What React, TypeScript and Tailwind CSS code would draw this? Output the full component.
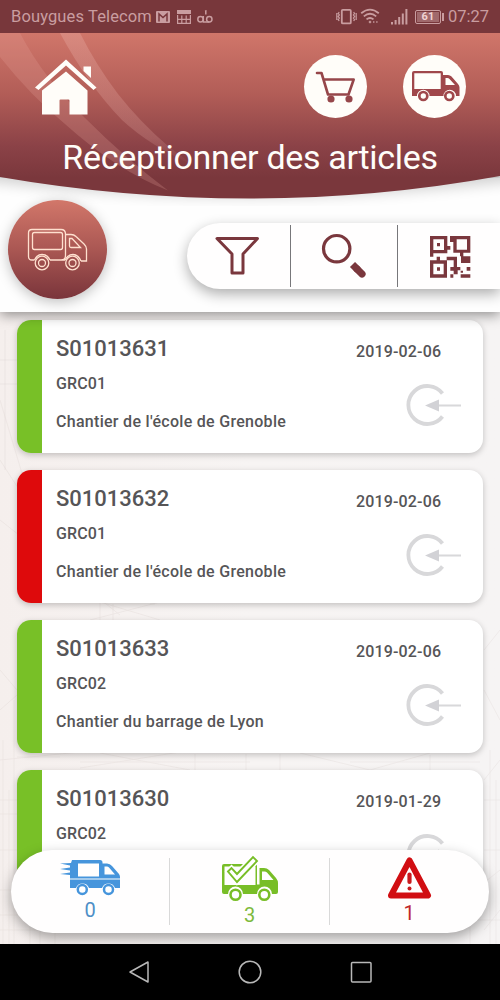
import React from "react";

type Status = "received" | "late";

interface Order {
  id: string;
  code: string;
  site: string;
  date: string;
  status: Status;
}

const orders: Order[] = [
  { id: "S01013631", code: "GRC01", site: "Chantier de l'école de Grenoble", date: "2019-02-06", status: "received" },
  { id: "S01013632", code: "GRC01", site: "Chantier de l'école de Grenoble", date: "2019-02-06", status: "late" },
  { id: "S01013633", code: "GRC02", site: "Chantier du barrage de Lyon", date: "2019-02-06", status: "received" },
  { id: "S01013630", code: "GRC02", site: "Chantier du barrage de Lyon", date: "2019-01-29", status: "received" },
];

function StatusBar() {
  return (
    <div className="relative z-20 flex h-[33px] shrink-0 items-center bg-[#78373b] pr-[11px] pl-[11px] text-[16.5px] text-[#c99da0]">
      <span className="w-[142px] whitespace-nowrap pt-[2px] tracking-[0.12px]">Bouygues Telecom</span>
      <svg className="ml-[3px] h-[12px] w-[14px]" viewBox="0 0 14 12">
        <rect width="14" height="12" rx="1" fill="#c99da0" />
        <path d="M3 10.5V3l4 3.6L11 3v7.5" fill="none" stroke="#78373b" strokeWidth="1.5" />
      </svg>
      <svg className="ml-[7px] h-[14px] w-[14px]" viewBox="0 0 14 14">
        <path d="M0 0h14v4H0z" fill="#c99da0" />
        <path d="M.6 5v8.400h12.800V5M.6 9.300h12.800M4.800 5.500v8M9.200 5.500v8" fill="none" stroke="#c99da0" strokeWidth="1.200" />
      </svg>
      <svg className="ml-[6px] h-[14px] w-[16px]" viewBox="0 0 16 14" fill="none" stroke="#c99da0" strokeWidth="1.5">
        <circle cx="3.5" cy="9.2" r="2.7" />
        <circle cx="12.3" cy="9.2" r="2.7" />
        <path d="M6.3 6v6.1h6M8 1.2l.8-.2v3.5" />
      </svg>
      <svg className="ml-auto h-[17px] w-[21px]" viewBox="0 0 21 17" fill="none" stroke="#c99da0">
        <rect x="5.8" y="1.8" width="9" height="13.6" rx="1" strokeWidth="1.8" />
        <path d="M3.2 4l-1 1.4 1.2 1.5-1.2 1.6 1.2 1.6-1.2 1.6 1 1.3M17.6 4l1 1.4-1.2 1.5 1.2 1.6-1.2 1.6 1.2 1.6-1 1.3M.8 5v7M20.2 5v7" strokeWidth="1.2" />
      </svg>
      <svg className="ml-[3px] h-[17px] w-[20px]" viewBox="0 0 20 17" fill="none" stroke="#c99da0" strokeWidth="1.8">
        <path d="M1.2 5.2Q10 -2 18.8 5.2M3.8 8.4Q10 3.2 16.2 8.4M6.5 11.4Q10 8.5 13.5 11.4" />
        <circle cx="10" cy="14" r="1" fill="#c99da0" strokeWidth=".6" />
        <path d="M13.3 14h1M16.4 14h1" strokeWidth="2" />
      </svg>
      <svg className="ml-[11px] h-[16px] w-[17px]" viewBox="0 0 17 16" fill="#c99da0">
        <path d="M0 13h2v2.5H0zM3.6 11h2v4.5h-2zM7.2 8h2v7.5h-2zM10.8 4.5h2v11h-2zM14.4 0h2v15.5h-2z" />
      </svg>
      <div className="ml-[7px] flex items-center">
        <div className="flex h-[14px] w-[26px] items-center justify-center rounded-[2px] border border-[#c99da0] bg-[#a0696c] bg-clip-content p-[1px] text-[11px] leading-none font-bold text-[#f0d3d3]">
          61
        </div>
        <div className="ml-[1px] h-[8px] w-[2px] bg-[#c99da0]" />
      </div>
      <span className="ml-[4px] pt-[2px] whitespace-nowrap">07:27</span>
    </div>
  );
}

function SolidTruck() {
  return (
    <svg className="h-[31px] w-[48px]" viewBox="0 0 48 31">
      <path
        fill="#a0474b"
        fillRule="evenodd"
        d="M2 0H29Q31 0 31 2V4H36Q38 4 39.5 5.5L46 13Q47.5 14.5 47.5 16.5V25H44A6 6 0 0 0 31.5 25H17.500A6 6 0 0 0 5 25H0V2Q0 0 2 0ZM2.300 2.300V18H28.700V2.300ZM33.500 7V14H43L37.500 8Q36.500 7 35.500 7Z"
      />
      <g fill="#fffdf9" stroke="#a0474b" strokeWidth="2.700">
        <circle cx="11.300" cy="25" r="4" />
        <circle cx="37.300" cy="25" r="4" />
      </g>
    </svg>
  );
}

function Header() {
  return (
    <header className="relative z-10 h-[145px] shrink-0">
      <svg className="pointer-events-none absolute top-0 left-0 h-[190px] w-[500px]" viewBox="0 33 500 190">
        <defs>
          <linearGradient id="brand" x1="0" y1="33" x2="0" y2="178" gradientUnits="userSpaceOnUse">
            <stop offset="0" stopColor="#d0766a" />
            <stop offset=".42" stopColor="#b25d57" />
            <stop offset=".78" stopColor="#8b4247" />
            <stop offset="1" stopColor="#7a373c" />
          </linearGradient>
          <linearGradient id="streak" x1="0" y1="33" x2="0" y2="165" gradientUnits="userSpaceOnUse">
            <stop offset="0" stopColor="#e8aca4" stopOpacity=".36" />
            <stop offset=".8" stopColor="#dc9f9b" stopOpacity=".26" />
            <stop offset="1" stopColor="#dc9f9b" stopOpacity="0" />
          </linearGradient>
          <filter id="edge" x="-10%" y="-10%" width="120%" height="130%">
            <feGaussianBlur stdDeviation="7" />
          </filter>
        </defs>
        <path d="M-20 150V180Q250 213 520 180V150Z" fill="#000" opacity=".18" filter="url(#edge)" />
        <path d="M0 33H500V176Q376 198.500 250 198.500Q124 198.500 0 177Z" fill="url(#brand)" />
        <path d="M0 33H20Q44 79 85 118Q125 158 168 190.500Q116 170 65 124Q30 95 0 57Z" fill="#e5a39c" opacity=".24" />
        <path d="M60 33H80Q96 65 118 94Q140 122 169 147L195 166Q150 146 122 120Q88 85 60 33Z" fill="url(#streak)" />
      </svg>
      <div className="relative flex items-center pt-[22px] pl-[35px]">
        <svg className="h-[57px] w-[62px]" viewBox="35.500 54.500 62 57" fill="#fffdf9">
          <path d="M66.500 56L97 84L94 86.500L66.500 62L39 86.500L35.500 84Z" />
          <path d="M84 63H91.500V74.500L84 67.500Z" />
          <path d="M66.500 68L88 87V111H70V97Q70 96 69 96H61Q60 96 60 97V111H42.500V87Z" />
        </svg>
        <div className="ml-[207px] flex size-[63px] items-center justify-center rounded-full bg-[#fffdf9]">
          <svg className="h-[32px] w-[41px]" viewBox="314 71 41 32" fill="none" stroke="#96464a" strokeWidth="2.600" strokeLinecap="round" strokeLinejoin="round">
            <path d="M316 73H320.500L327 94.500H347.500L352.700 79.500H324" />
            <circle cx="330" cy="99" r="2.300" fill="#96464a" />
            <circle cx="348" cy="99" r="2.300" fill="#96464a" />
          </svg>
        </div>
        <div className="ml-[36px] flex size-[63px] items-center justify-center rounded-full bg-[#fffdf9] pl-[2px]">
          <SolidTruck />
        </div>
      </div>
      <h1 className="relative mt-[17px] text-center text-[34px] leading-[44px] tracking-[-0.32px] whitespace-nowrap text-[#fffdf9]">Réceptionner des articles</h1>
    </header>
  );
}

function OutlineTruck() {
  return (
    <svg className="h-[43px] w-[61px]" viewBox="27 228 61 43" fill="none" stroke="#ffe0cf" strokeWidth="1.300">
      <path d="M34.500 260H32Q28.500 260 28.500 256.500V233Q28.500 229.500 32 229.500H61Q65.500 229.500 65.500 234V255.500Q65.500 260 61 260H50M66 234.500H71Q74 234.500 76 236.500L84 244Q86.500 246.500 86.500 249V261H81M50 260H65" />
      <rect x="32.500" y="232.500" width="30" height="17" rx="2" />
      <path d="M69.500 238.500H72L80.500 247.500H71Q69.500 247.500 69.500 246Z" />
      <circle cx="42" cy="263" r="6.800" />
      <circle cx="42" cy="263" r="3.500" />
      <circle cx="72.500" cy="263" r="6.800" />
      <circle cx="72.500" cy="263" r="3.500" />
      <path d="M34.500 260Q37 254.500 42 254.500Q47.500 254.500 50 260M65 260Q68 254.500 73 254.500Q78 254.500 81 261" />
    </svg>
  );
}

function Toolbar() {
  return (
    <div className="relative z-[5] flex h-[134px] shrink-0 items-start bg-[#fefefe] pt-[22px] pl-[8px] shadow-[0_3px_12px_rgba(0,0,0,0.42)]">
      <button className="relative z-20 flex size-[99px] items-center justify-center rounded-full bg-linear-to-b from-[#d2776a] via-[#aa5753] to-[#7a353b] shadow-[0_3px_13px_rgba(0,0,0,0.25)]">
        <OutlineTruck />
      </button>
      <div className="mt-[23px] ml-[80px] flex h-[66px] flex-1 items-center rounded-l-[33px] bg-[#fffefe] shadow-[0_5px_14px_rgba(0,0,0,0.32)]">
        <button className="flex w-[103px] justify-center pr-[4px]">
          <svg className="h-[42px] w-[48px]" viewBox="213 235 48 42" fill="none" stroke="#7a373d" strokeWidth="3" strokeLinejoin="round">
            <path d="M217 238.500H257.500L243 254V273H232V254Z" />
          </svg>
        </button>
        <div className="h-[62px] w-px bg-[#77777a]" />
        <button className="flex w-[106px] justify-center">
          <svg className="h-[48px] w-[50px]" viewBox="319 231 50 48" fill="none" stroke="#7a373d">
            <circle cx="336.700" cy="247.700" r="13.200" strokeWidth="3.200" />
            <path d="M352.500 263.500L358 269" strokeWidth="7.200" />
            <path d="M357 268L362 273" strokeWidth="7.200" strokeLinecap="round" />
          </svg>
        </button>
        <div className="h-[62px] w-px bg-[#77777a]" />
        <button className="flex flex-1 justify-center pb-px pl-[2px]">
          <svg className="size-[50px]" viewBox="0 0 150 150" fill="#7a373d">
            <path fillRule="evenodd" d="M15 15H67V67H25V77H15ZM25 25V57H57V25ZM85 15H136V65H115V76H136V96H108V76H105V65H85V33H75V15ZM95 25V56H126V25ZM15 88H35V77H45V88H66V140H15ZM25 98V130H56V98Z" />
            <path d="M36 36H45V46H36ZM65 45H76V56H65ZM36 109H45V119H36ZM65 77H96V108H106V118H98V130H86V119H76V108H86V88H65ZM125 108H136V119H125ZM76 130H85V140H76ZM107 130H136V140H107ZM107 119H114V125H107Z" />
          </svg>
        </button>
      </div>
    </div>
  );
}

function OrderCard({ order }: { order: Order }) {
  return (
    <article className="flex h-[133px] shrink-0 overflow-hidden rounded-[14px] bg-white text-[#565557] shadow-[0_2px_6px_rgba(0,0,0,0.22)]">
      <div className={order.status === "late" ? "w-[25px] bg-[#de0a0c]" : "w-[25px] bg-[#78c027]"} />
      <div className="flex flex-1 flex-col pt-[16px] pl-[14px] text-[16px] leading-[20px] font-medium">
        <h2 className="text-[22px] leading-[26px]">{order.id}</h2>
        <p className="mt-[12px] tracking-[0.15px]">{order.code}</p>
        <p className="mt-[18px] tracking-[0.29px] whitespace-nowrap">{order.site}</p>
      </div>
      <div className="flex w-[127px] flex-col pt-[22px]">
        <time className="text-[16px] leading-[20px] font-medium tracking-[0.15px]">{order.date}</time>
        <svg className="mt-[22px] ml-[49px] h-[43px] w-[57px]" viewBox="405 384 57 43" fill="none" stroke="#d8d8da">
          <path d="M442.500 393.500A19 19 0 1 0 442.500 416.500" strokeWidth="3.800" />
          <path d="M436 405.500H461" strokeWidth="2.200" />
          <path d="M425 405.500L439 399.500V411.500Z" fill="#d2d2d6" stroke="none" />
        </svg>
      </div>
    </article>
  );
}

function Backdrop() {
  return (
    <svg className="absolute inset-0 size-full" viewBox="0 312 500 632" fill="none" stroke="#c9bdb9" strokeWidth=".8">
      <g opacity=".22">
        <path d="M0 460L90 600M0 520L120 615M0 400L30 500M100 602V620M113 604V620M100 602L160 620M150 604H155M90 620L160 602M0 360H17M0 384H17M5 330V470" />
        <path d="M80 768L180 752M100 753L190 770M195 754V770M246 754V770M280 754V770M300 753L370 770M370 770L430 753M430 755V770M350 762H480M80 762H250" />
        <path d="M3 740V944M9 790V944M14 700V944M0 800H17M0 814H17M0 850H17M0 890H40M0 915H60M30 870V944M40 900V944M55 910V944M0 930H400" />
        <path d="M484 780L500 760M484 800H500M490 750V944M496 780V944M484 850H500M475 890L500 870M460 920H500M470 910V944M484 930L500 910" />
        <path d="M0 670L17 690M0 710L17 695M484 650L500 630M484 690L500 720M0 760L80 752M17 757H60" />
      </g>
    </svg>
  );
}

function DeliveryTruck({ color, fast }: { color: string; fast?: boolean }) {
  if (fast) {
    return (
      <svg className="h-[38px] w-[62px]" viewBox="59 859 62 38">
        <path fill={color} fillRule="evenodd" d="M72 861H100Q102.500 861 102.500 863.500V864.500H107Q110 864.500 112 867L119 875Q120 876.500 120 878V879.500H70V876L60 875L70 873.500V871.500L60 870L70 868.500V866.500L60 864.500L71 864ZM78 864.500V877.500H99V864.500ZM104.500 867.500V875.500H115L109 868.500Q108 867.500 107 867.500Z" />
        <path fill={color} d="M70 880.500H120V889H115A7 7 0 0 0 102 889H89A7 7 0 0 0 76 889H70Z" />
        <g fill="white" stroke={color} strokeWidth="2.500">
          <circle cx="82.300" cy="890.500" r="4.500" />
          <circle cx="108.500" cy="890.500" r="4.500" />
        </g>
      </svg>
    );
  }
  return (
    <svg className="h-[48px] w-[60px]" viewBox="220 854 60 48">
      <path fill={color} fillRule="evenodd" d="M224 864H257V884.500H259.500V868H264Q267 868 269 870L276 878Q278 880.500 278 883V892Q278 894 276 894H272A7.500 7.500 0 0 0 257 894H243A7.500 7.500 0 0 0 228 894H224Q222 894 222 892V866Q222 864 224 864ZM224.500 866.500V885H255.500V866.500ZM262 871.500V880H273.500L267 872.500Q266 871.500 264.500 871.500Z" />
      <g fill="white" stroke={color} strokeWidth="2.600">
        <circle cx="235.500" cy="894.800" r="5" />
        <circle cx="264.300" cy="894.800" r="5" />
      </g>
      <path d="M228 871.500L231.500 868L237 874L253 857L257 861L237 882Z" fill="white" stroke="white" strokeWidth="5" />
      <path d="M228 871.500L231.500 868L237 874L253 857L257 861L237 882Z" fill="white" stroke={color} strokeWidth="1.900" />
    </svg>
  );
}

function Summary() {
  return (
    <div className="absolute right-[11px] bottom-[11px] left-[11px] z-10 flex h-[83px] rounded-[42px] bg-[#fffefe] pt-[8px] text-[20px] leading-[20px] shadow-[0_5px_13px_rgba(0,0,0,0.34)]">
      <div className="flex h-[67px] w-[159px] flex-col items-center border-r border-[#d9d9d9]">
        <DeliveryTruck color="#4695dc" fast />
        <span className="mt-[4px] text-[#4e8fc7]">0</span>
      </div>
      <div className="flex h-[67px] w-[160px] flex-col items-center border-r border-[#d9d9d9]">
        <div className="-mt-[4px]">
          <DeliveryTruck color="#78be27" />
        </div>
        <span className="mt-[3px] text-[#7dba3b]">3</span>
      </div>
      <div className="flex flex-1 flex-col items-center pr-px">
        <svg className="-mt-px h-[43px] w-[46px]" viewBox="386 857 46 43">
          <path d="M409.500 860.500L428 895.500H391Z" fill="none" stroke="#d10e12" strokeWidth="6" strokeLinejoin="round" />
          <path d="M409.500 874.500V882" stroke="#c9191d" strokeWidth="4.200" strokeLinecap="round" />
          <circle cx="409.500" cy="888.500" r="2" fill="#c9191d" />
        </svg>
        <span className="mt-[3px] text-[#bf262b]">1</span>
      </div>
    </div>
  );
}

function NavigationBar() {
  return (
    <nav className="flex h-[56px] shrink-0 items-center justify-center gap-[87px] bg-black">
      <svg className="size-[24px]" viewBox="0 0 24 24" fill="none" stroke="#b8b8b8" strokeWidth="1.500" strokeLinejoin="round">
        <path d="M21 2V22L3 12Z" />
      </svg>
      <svg className="size-[24px]" viewBox="0 0 24 24" fill="none" stroke="#b8b8b8" strokeWidth="1.500">
        <circle cx="12" cy="12" r="10.800" />
      </svg>
      <svg className="size-[24px]" viewBox="0 0 24 24" fill="none" stroke="#b8b8b8" strokeWidth="1.500">
        <rect x="2.500" y="2.500" width="19.500" height="19.500" rx="1" />
      </svg>
    </nav>
  );
}

export default function App() {
  return (
    <div className="flex h-[1000px] w-[500px] flex-col overflow-hidden bg-white font-['Roboto',sans-serif]">
      <StatusBar />
      <Header />
      <Toolbar />
      <main className="relative min-h-0 flex-1 overflow-hidden bg-linear-to-r from-[#f5efed] via-[#f7f4f3] to-[#f6f4f4]">
        <Backdrop />
        <div className="relative flex h-full flex-col gap-[17px] overflow-hidden px-[17px] pt-[8px]">
          {orders.map((order) => (
            <OrderCard key={order.id} order={order} />
          ))}
        </div>
        <Summary />
      </main>
      <NavigationBar />
    </div>
  );
}
